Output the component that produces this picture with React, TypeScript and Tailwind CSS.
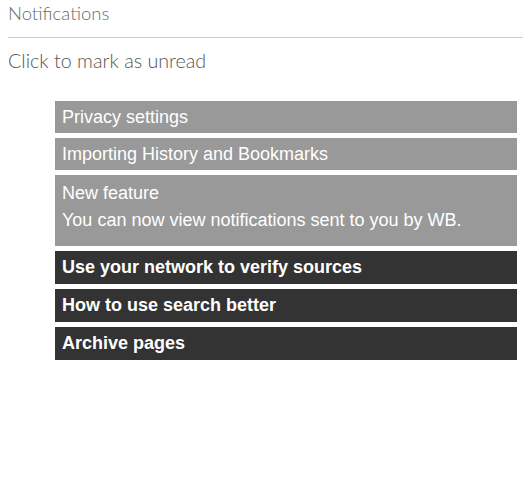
const READ = ["Privacy settings", "Importing History and Bookmarks"];
const UNREAD = ["Use your network to verify sources", "How to use search better", "Archive pages"];

export default function App() {
  return (
    <div className="min-h-[500px] bg-white px-2 font-['Liberation_Sans',Arial,sans-serif]">
      <h1 className="pt-[3px] font-['Lato',sans-serif] text-[18.5px] leading-[20px] font-light text-[#6b6b6b]">
        Notifications
      </h1>
      <hr className="mt-[14px] border-t border-[#ccc]" />
      <p className="mt-[13px] font-['Lato',sans-serif] text-[19.7px] leading-[20px] font-light text-[#555]">
        Click to mark as unread
      </p>

      <ul className="mt-[30px] ml-[47px] mr-[6px] flex flex-col gap-[5px] text-[18px] text-white">
        {READ.map((t) => (
          <li key={t} className="flex h-[32px] items-center bg-[#999] px-[7px]">
            {t}
          </li>
        ))}
        <li className="flex flex-col bg-[#999] px-[7px] pt-[5px] pb-[12px] leading-[27px]">
          <span>New feature</span>
          <span>You can now view notifications sent to you by WB.</span>
        </li>
        {UNREAD.map((t) => (
          <li key={t} className="flex h-[33px] items-center bg-[#333] px-[7px] font-bold">
            {t}
          </li>
        ))}
      </ul>
    </div>
  );
}
